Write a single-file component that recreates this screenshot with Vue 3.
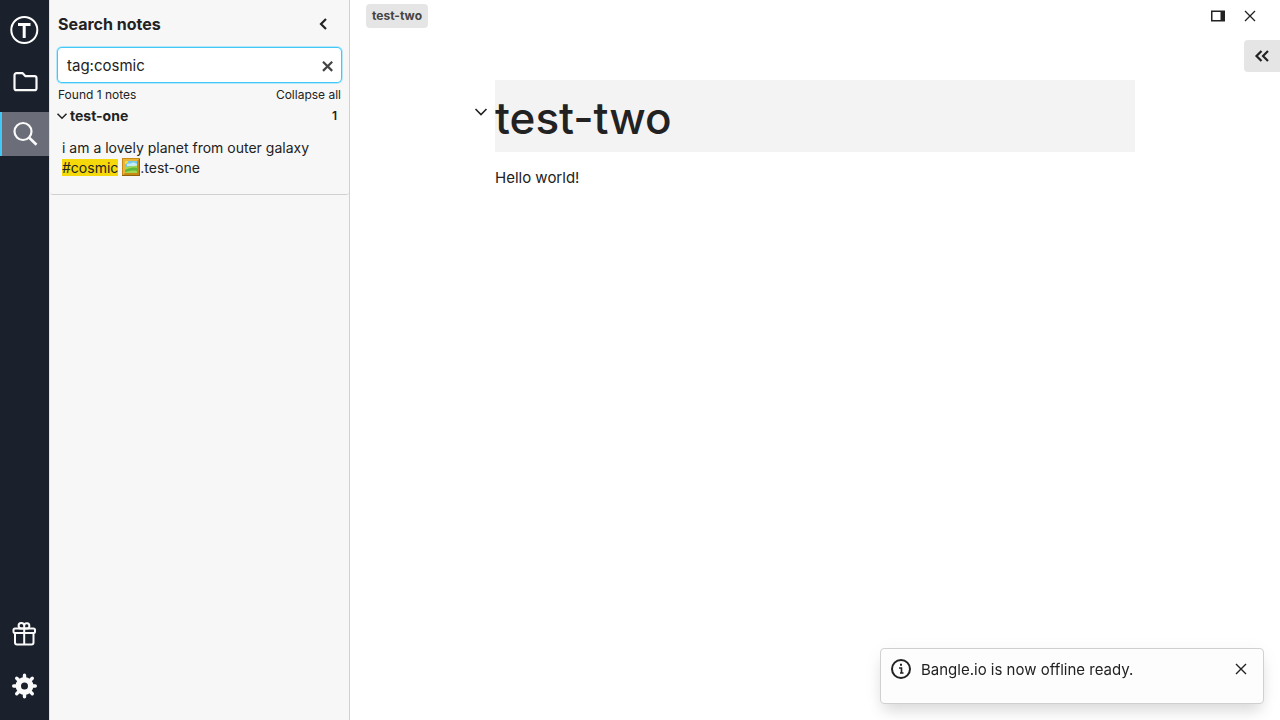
<script setup>
import { ref } from 'vue'

const query = ref('tag:cosmic')
const open = ref(true)
</script>

<template>
  <div class="app">
    <nav class="rail" aria-label="Activity bar">
      <button class="rail-btn even" aria-label="Home">
        <svg width="30" height="30" viewBox="0 0 30 30" fill="none" stroke="#fff">
          <circle cx="15.300" cy="15" r="13" stroke-width="2" />
          <path d="M9 9.500h12.500M15.200 9.500v13.500" stroke-width="3" />
        </svg>
      </button>
      <button class="rail-btn" aria-label="Files">
        <svg width="28" height="28" viewBox="0 0 28 28" fill="none" stroke="#fafafa" stroke-width="2.200" stroke-linejoin="round">
          <path d="M3.500 7.200a2 2 0 0 1 2-2h6.200l2.800 3h9a2 2 0 0 1 2 2v10a2 2 0 0 1-2 2h-18a2 2 0 0 1-2-2z" />
        </svg>
      </button>
      <button class="rail-btn active" aria-label="Search notes">
        <svg width="28" height="28" viewBox="0 0 28 28" fill="none" stroke="#fafafa">
          <circle cx="12" cy="11.500" r="8.500" stroke-width="2.200" />
          <path d="M18 17.500l7.500 7.200" stroke-width="2.600" />
        </svg>
      </button>
      <span class="spacer"></span>
      <button class="rail-btn even" aria-label="What's new">
        <svg width="28" height="28" viewBox="0 0 28 28" fill="none" stroke="#fafafa" stroke-width="2" stroke-linejoin="round">
          <rect x="3.500" y="8.500" width="21.500" height="4.500" rx="1.500" />
          <path d="M5 13v9.500a2 2 0 0 0 2 2h14.500a2 2 0 0 0 2-2V13M14.200 8.500v16" />
          <path d="M14.200 8.500h-2.700a2.800 2.800 0 1 1 2.700-3zM14.200 8.500h2.700a2.600 2.600 0 1 0-2.700-3z" />
        </svg>
      </button>
      <button class="rail-btn even" aria-label="Settings">
        <svg width="28" height="28" viewBox="0 0 28 28" fill="none" stroke="#fafafa" stroke-linecap="round">
          <circle cx="14.500" cy="14" r="6.200" stroke-width="5.400" />
          <path d="M14.500 3.200v3M14.500 21.800v3M3.700 14h3M22.300 14h3M6.700 6.200l2 2M20.300 19.800l2 2M6.700 21.800l2-2M20.300 8.200l2-2" stroke-width="3.400" />
        </svg>
      </button>
    </nav>

    <aside class="panel">
      <header class="panel-head">
        <h2>Search notes</h2>
        <button class="collapse" aria-label="Hide sidebar">
          <svg width="16" height="16" viewBox="0 0 16 16" fill="none" stroke="currentColor" stroke-width="2.200"><path d="M11 3L6 8l5 5" /></svg>
        </button>
      </header>
      <div class="search">
        <input v-model="query" type="text" aria-label="Search notes" />
        <button aria-label="Clear search" @click="query = ''">
          <svg width="16" height="16" viewBox="0 0 16 16" fill="none" stroke="currentColor" stroke-width="2.200"><path d="M4 4.700l9.200 9.200M13.200 4.700L4 13.900" /></svg>
        </button>
      </div>
      <div class="summary">
        <span>Found 1 notes</span>
        <button @click="open = !open">Collapse all</button>
      </div>
      <section class="result">
        <button class="result-head" :aria-expanded="open" @click="open = !open">
          <svg width="12" height="12" viewBox="0 0 12 12" fill="none" stroke="currentColor" stroke-width="1.500"><path d="M1.500 3.800L6 8.300l4.500-4.500" /></svg>
          <b>test-one</b>
          <span>1</span>
        </button>
        <p v-if="open">
          i am a lovely planet from outer galaxy <mark>#cosmic</mark>&nbsp;<svg class="picture" role="img" aria-label="Framed picture" width="18" height="18" viewBox="0 0 18 18">
            <path fill="#c98a12" d="M0 0h18v18H0z" />
            <path fill="#e8b43a" d="M1 1h16l-2 2H3v12l-2 2z" />
            <path fill="#8f620c" d="M0 17h18v1H0zM17 1h1v17h-1z" />
            <path fill="#72c9e9" d="M3 3h12v12H3z" />
            <path fill="#c8ebf3" d="M5 6c2-1 3 0 5-1s3 0 5 1v2H5z" />
            <path fill="#f9dc3c" d="M3 3h3a3 3 0 0 1-3 3z" />
            <path fill="#a2d653" d="M3 9.500c4-2 8-1 12-2V15H3z" />
            <path fill="#5cb83c" d="M3 12c4-2 8-3 12-2v3c-4-1-8 0-12 1z" />
          </svg><span>.test-one</span>
        </p>
      </section>
    </aside>

    <main class="main">
      <header class="tabs">
        <a class="tab" href="#test-two">test-two</a>
        <div class="actions">
          <button aria-label="Split screen">
            <svg width="16" height="16" viewBox="0 0 16 16" fill="currentColor"><path fill-rule="evenodd" d="M1 2.500h14v11H1zM2.500 4v8h8V4z" /></svg>
          </button>
          <button aria-label="Close note">
            <svg width="16" height="16" viewBox="0 0 16 16" fill="none" stroke="currentColor" stroke-width="1.300"><path d="M3 3l10 10M13 3L3 13" /></svg>
          </button>
        </div>
      </header>
      <button class="aside-toggle" aria-label="Show note aside">
        <svg width="16" height="16" viewBox="0 0 16 16" fill="none" stroke="currentColor" stroke-width="2.200"><path d="M7.500 3l-5 5 5 5M14 3L9 8l5 5" /></svg>
      </button>
      <article id="test-two" class="note">
        <button class="fold" aria-label="Fold heading">
          <svg width="16" height="16" viewBox="0 0 16 16" fill="none" stroke="currentColor" stroke-width="1.600"><path d="M2.500 5L8 10.500 13.500 5" /></svg>
        </button>
        <h1>test-two</h1>
        <p>Hello world!</p>
      </article>
    </main>

    <div class="toast" role="status">
      <svg width="24" height="24" viewBox="0 0 24 24" fill="none" stroke="currentColor" stroke-width="2">
        <circle cx="12" cy="12" r="9" />
        <path d="M10 11h2.500v5M11 16h3.500" stroke-width="1.600" />
        <path d="M11 7.800h2" />
      </svg>
      <span>Bangle.io is now offline ready.</span>
      <button aria-label="Dismiss">
        <svg width="16" height="16" viewBox="0 0 16 16" fill="none" stroke="currentColor" stroke-width="1.400"><path d="M3 3l10 10M13 3L3 13" /></svg>
      </button>
    </div>
  </div>
</template>

<style>
body { margin: 0; }
</style>

<style scoped>
.app {
  display: flex;
  min-height: 100vh;
  font: 15px/26px Inter, "Liberation Sans", sans-serif;
  color: #222;
  background: #fff;
}
button {
  display: flex;
  align-items: center;
  justify-content: center;
  padding: 0;
  border: 0;
  background: none;
  font: inherit;
  color: inherit;
  cursor: pointer;
}
svg { flex: none; }
h1, h2, p { margin: 0; }

.rail {
  display: flex;
  flex-direction: column;
  gap: 8px;
  flex: none;
  width: 49px;
  box-sizing: border-box;
  padding: 8px 0 12px;
  background: #1a202c;
}
.rail-btn { height: 44px; padding-left: 1px; }
.rail-btn.even { padding: 0 1px 0 0; }
.rail-btn.active { background: #6b6e79; box-shadow: inset 2px 0 #42c8f5; }
.spacer { flex: 1; }

.panel {
  flex: none;
  width: 301px;
  box-sizing: border-box;
  border-left: 1px solid #e2e2e8;
  border-right: 1px solid #d0d0d0;
  background: #f7f7f7;
}
.panel-head {
  display: flex;
  align-items: center;
  justify-content: space-between;
  height: 48px;
  padding: 0 18px 0 8px;
}
h2 { font-size: 16px; font-weight: 700; }
.search {
  display: flex;
  align-items: center;
  height: 34px;
  margin: 0 8px;
  padding: 0 6px 0 9px;
  box-sizing: border-box;
  border-radius: 4px;
  background: #fff;
  box-shadow: 0 0 0 1px #42c8f5, 0 0 0 2px #b5e8fa;
}
.search input {
  flex: 1;
  min-width: 0;
  padding: 2px 0 0;
  border: 0;
  outline: 0;
  background: none;
  color: inherit;
  font: inherit;
}
.search button { color: #444; }
.summary {
  display: flex;
  justify-content: space-between;
  padding: 5px 8px 0;
  font-size: 12px;
  line-height: 16px;
}
.result {
  padding-bottom: 16px;
  border-bottom: 1px solid #d0d0d0;
  border-radius: 3px;
  font-size: 14px;
  line-height: 20px;
}
.result-head {
  width: 100%;
  height: 26px;
  padding: 0 12px 0 6px;
  gap: 2px;
  text-align: left;
}
.result-head b { flex: 1; font-weight: 700; }
.result-head span { font-size: 12px; font-weight: 600; }
.result p { padding: 9px 32px 0 12px; }
mark { background: #f5d90a; color: inherit; }
.picture { vertical-align: -3px; }

.main { flex: 1; min-width: 0; position: relative; }
.tabs {
  display: flex;
  justify-content: space-between;
  align-items: center;
  height: 32px;
  padding: 0 22px 0 16px;
}
.tab {
  padding: 4px 6px;
  border-radius: 4px;
  background: #e5e5e5;
  color: #444;
  font-size: 12px;
  line-height: 16px;
  font-weight: 700;
  text-decoration: none;
}
.actions { display: flex; gap: 16px; }
.aside-toggle {
  position: absolute;
  top: 40px;
  right: 0;
  width: 36px;
  height: 32px;
  border-radius: 4px 0 0 4px;
  background: #e5e5e5;
}
.note {
  position: relative;
  max-width: 640px;
  margin: 48px auto 0;
}
.fold { position: absolute; top: 24px; left: -22px; }
h1 {
  padding: 4px 0 0;
  background: #f3f3f3;
  font-size: 44px;
  line-height: 68px;
  font-weight: 500;
}
.note p { padding-top: 13px; }

.toast {
  position: fixed;
  right: 16px;
  bottom: 16px;
  display: flex;
  align-items: flex-start;
  gap: 8px;
  width: 384px;
  min-height: 56px;
  box-sizing: border-box;
  padding: 8px 14px 8px 8px;
  border: 1px solid #d0d0d0;
  border-radius: 4px;
  background: #fdfdfd;
  box-shadow: 0 10px 16px -3px rgba(0, 0, 0, 0.12), 0 4px 20px rgba(0, 0, 0, 0.05);
}
.toast span { flex: 1; }
.toast button { height: 24px; }
</style>
